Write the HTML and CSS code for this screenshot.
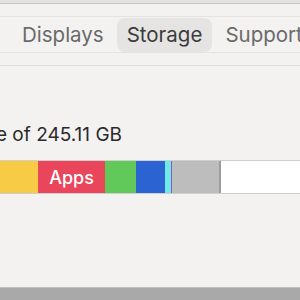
FILE: index.html
```html
<!DOCTYPE html>
<html lang="en">
<head>
  <meta charset="UTF-8" />
  <title>Storage</title>
  <link rel="stylesheet" href="styles.css">
</head>
<body>
  <div class="window">
    <div class="titlebar"></div>
    <div class="toolbar"></div>
    <nav class="tabs">
      <span class="divider"></span>
      <span class="tab">Displays</span>
      <span class="tab active">Storage</span>
      <span class="tab">Support</span>
    </nav>
    <div class="spacer"></div>
    <main class="content">
      <div class="summary"><span>180.72 GB available of 245.11 GB</span></div>
      <div class="bar">
        <div class="seg docs"></div>
        <div class="seg apps">Apps</div>
        <div class="seg photos"></div>
        <div class="seg system"></div>
        <div class="seg cyan"></div>
        <div class="seg purple"></div>
        <div class="seg other"></div>
        <div class="seg free"></div>
      </div>
    </main>
    <footer class="bottom"></footer>
  </div>
</body>
</html>
```

FILE: styles.css
```css
:root {
  --bg: #f3f2f1;
  --tab-text: #6a6a6a;
  --tab-active-bg: #e5e4e3;
  --tab-active-text: #3b3b3b;
  --text: #2a2a2a;
}

body {
  margin: 0;
  background: var(--bg);
  font-family: Inter, "Liberation Sans", sans-serif;
}

.window {
  display: flex;
  flex-direction: column;
  height: 300px;
  overflow: hidden;
}

.titlebar {
  height: 3px;
  background: #e2e2e2;
  border-bottom: 1px solid #c9c9c9;
}

.toolbar {
  height: 12px;
  border-bottom: 1px solid #e4e3e2;
}

.tabs {
  display: flex;
  align-items: center;
  gap: 3px;
  height: 35px;
  padding-left: 8px;
  border-bottom: 1px solid #e4e3e2;
}

.divider {
  width: 1px;
  height: 22px;
  background: #d8d7d6;
  margin-right: 1px;
}

.tab {
  display: flex;
  align-items: center;
  height: 34px;
  padding: 0 10px;
  border-radius: 8px;
  font-size: 20.5px;
  color: var(--tab-text);
}

.tab.active {
  background: var(--tab-active-bg);
  color: var(--tab-active-text);
}

.spacer {
  height: 12px;
  border-bottom: 1px solid #dedddc;
}

.content {
  flex: 1;
  display: flex;
  flex-direction: column;
  padding-top: 58px;
}

.summary {
  display: flex;
  justify-content: flex-end;
  width: 122px;
  overflow: hidden;
  white-space: nowrap;
  font-size: 19px;
  color: var(--text);
  height: 22px;
  line-height: 22px;
}

.bar {
  display: flex;
  height: 34px;
  margin-top: 14px;
  border-top: 1px solid #cfcfcf;
  border-bottom: 1px solid #cfcfcf;
  box-sizing: border-box;
}

.seg {
  height: 100%;
}

.docs { width: 38px; background: #f7cb45; }
.apps {
  width: 67px;
  background: #e9455b;
  color: #ffffff;
  font-size: 18px;
  font-weight: 500;
  display: flex;
  align-items: center;
  justify-content: center;
}
.photos { width: 31px; background: #60c95a; }
.system { width: 29px; background: #2c63d2; }
.cyan { width: 6px; background: #6fe8e8; }
.purple { width: 1px; background: #9b4fc9; }
.other {
  width: 47px;
  background: #bdbdbd;
  border-right: 2px solid #9c9c9c;
}
.free { flex: 1; background: #ffffff; }

.bottom {
  height: 12px;
  background: #a9a9a9;
  border-top: 1px solid #bebebe;
}
```
